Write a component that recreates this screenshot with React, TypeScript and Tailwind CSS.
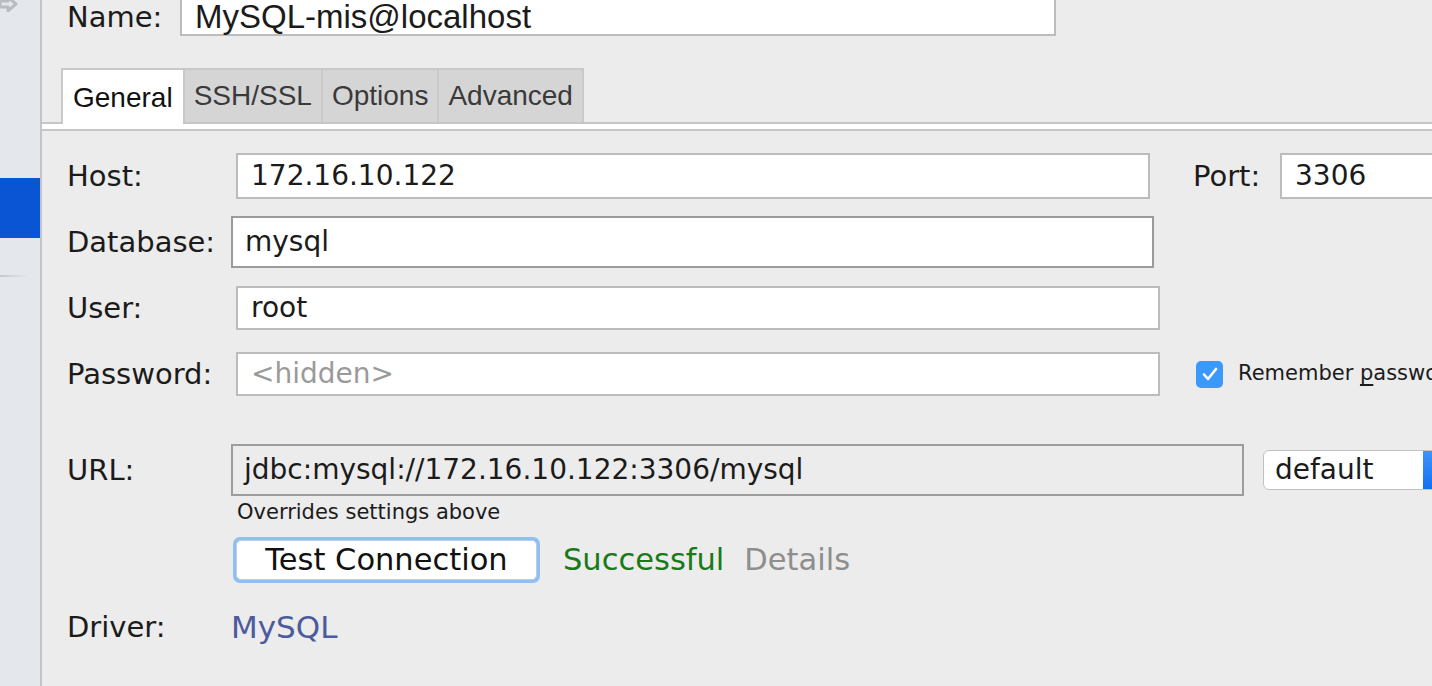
import React from "react";

const labelCls = "shrink-0 text-[29px] leading-[36px] text-[#1b1b1b]";
const fieldCls =
  "shrink-0 h-full bg-white border-2 border-[#bcbcbc] flex items-center text-[28px] text-[#1b1b1b] pl-[13px]";

const TABS = ["General", "SSH/SSL", "Options", "Advanced"];

function Sidebar() {
  return (
    <div className="w-[42px] shrink-0 bg-[#e4e7eb] border-r-2 border-[#c4c4c4] flex flex-col">
      <div className="h-[14px] -mt-[4px]">
        <svg width="20" height="16" viewBox="0 0 20 16">
          <path
            d="M0 5h8V1l8 7-8 7v-4H0z"
            fill="none"
            stroke="#b9bcc0"
            strokeWidth="3"
            strokeLinejoin="round"
          />
        </svg>
      </div>
      <div className="h-[168px]" />
      <div className="h-[60px] bg-[#0a55d4]" />
      <div className="h-[37px]" />
      <div className="h-[2px] w-[28px] bg-gradient-to-r from-[#c6c8cc] to-[#e4e7eb]" />
    </div>
  );
}

function Tabs() {
  return (
    <div className="flex items-end h-[56px] mt-[32px] pl-[19px] border-b-2 border-[#c6c6c6] font-['Liberation_Sans',Arial,sans-serif]">
      {TABS.map((t, i) =>
        i === 0 ? (
          <div
            key={t}
            className="shrink-0 h-[56px] -mb-[2px] bg-white border-l-2 border-t-2 border-[#c9c9c9] px-[10px] pt-[7px] text-[28px] text-[#111]"
          >
            {t}
          </div>
        ) : (
          <div
            key={t}
            className="shrink-0 h-[54px] bg-[#d5d5d5] border-t-2 border-l-2 border-[#c9c9c9] last:border-r-2 px-[9px] pt-[5px] text-[28px] text-[#3a3a3a]"
          >
            {t}
          </div>
        )
      )}
    </div>
  );
}

export default function App() {
  return (
    <div className="w-[1432px] h-[686px] overflow-hidden flex bg-[#ececec] font-['DejaVu_Sans',sans-serif]">
      <Sidebar />
      <div className="flex-1 flex flex-col min-w-0">
        {/* name */}
        <div className="flex items-center h-[38px] -mt-[2px] pl-[25px]">
          <div className={`${labelCls} w-[113px]`}>Name:</div>
          <div className="shrink-0 h-full w-[876px] bg-white border-2 border-[#bcbcbc] flex items-center pl-[13px] text-[33px] text-[#1b1b1b] font-['Liberation_Sans',Arial,sans-serif]">
            MySQL-mis@localhost
          </div>
        </div>

        <Tabs />
        <div className="h-[5px] bg-white" />
        <div className="h-[2px] bg-[#c6c6c6]" />

        <div className="flex flex-col pl-[25px]">
          {/* host */}
          <div className="flex items-center h-[46px] mt-[22px]">
            <div className={`${labelCls} w-[169px]`}>Host:</div>
            <div className={`${fieldCls} w-[914px]`}>172.16.10.122</div>
            <div className={`${labelCls} ml-[43px] w-[87px]`}>Port:</div>
            <div className={`${fieldCls} w-[220px]`}>3306</div>
          </div>

          {/* database */}
          <div className="flex items-center h-[52px] mt-[17px]">
            <div className={`${labelCls} w-[164px]`}>Database:</div>
            <div className="shrink-0 h-full w-[923px] bg-white border-2 border-[#9b9b9b] flex items-center pl-[12px] text-[28px] text-[#1b1b1b]">
              mysql
            </div>
          </div>

          {/* user */}
          <div className="flex items-center h-[44px] mt-[18px]">
            <div className={`${labelCls} w-[169px]`}>User:</div>
            <div className={`${fieldCls} w-[924px]`}>root</div>
          </div>

          {/* password */}
          <div className="flex items-center h-[44px] mt-[22px]">
            <div className={`${labelCls} w-[169px]`}>Password:</div>
            <div className={`${fieldCls} w-[924px] text-[#9a9a9a] pl-[11px]`}>&lt;hidden&gt;</div>
            <div className="ml-[36px] w-[27px] h-[27px] shrink-0 rounded-[5px] bg-[#3c99fc] flex items-center justify-center">
              <svg width="18" height="16" viewBox="0 0 18 16">
                <path
                  d="M3 8.5l4 4.5 8-10"
                  fill="none"
                  stroke="#fff"
                  strokeWidth="2.6"
                  strokeLinecap="round"
                  strokeLinejoin="round"
                />
              </svg>
            </div>
            <div className="shrink-0 ml-[15px] whitespace-nowrap text-[21px] text-[#1b1b1b]">
              Remember <span className="underline underline-offset-4">p</span>assword
            </div>
          </div>

          {/* url */}
          <div className="flex items-center h-[52px] mt-[48px]">
            <div className={`${labelCls} w-[164px]`}>URL:</div>
            <div className="h-full w-[1013px] shrink-0 border-2 border-[#9d9d9d] flex items-center pl-[11px] text-[28px] text-[#1b1b1b]">
              jdbc:mysql://172.16.10.122:3306/mysql
            </div>
            <div className="ml-[19px] h-[40px] w-[210px] shrink-0 flex rounded-[6px] border border-[#c2c2c2] bg-white overflow-hidden">
              <div className="w-[159px] pl-[11px] flex items-center text-[28px] text-[#1b1b1b]">default</div>
              <div className="flex-1 bg-gradient-to-b from-[#3c95fb] to-[#0d70f2]" />
            </div>
          </div>

          <div className="h-[24px] mt-[4px] pl-[170px] text-[21px] leading-[24px] text-[#1b1b1b]">
            Overrides settings above
          </div>

          {/* test */}
          <div className="flex items-center h-[46px] mt-[13px] pl-[166px]">
            <div className="shrink-0 h-full w-[307px] rounded-[7px] bg-[#92bff3] p-[3px]">
              <div className="h-full rounded-[5px] bg-white border border-[#b9cde6] flex items-center justify-center text-[30.5px] text-[#111]">
                Test Connection
              </div>
            </div>
            <div className="shrink-0 ml-[23px] text-[30.5px] text-[#187a18]">Successful</div>
            <div className="shrink-0 ml-[20px] text-[30.5px] text-[#8e8e8e]">Details</div>
          </div>

          {/* driver */}
          <div className="flex items-center h-[36px] mt-[26px]">
            <div className={`${labelCls} w-[164px]`}>Driver:</div>
            <div className="text-[31px] text-[#4c5b9c]">MySQL</div>
          </div>
        </div>
      </div>
    </div>
  );
}
